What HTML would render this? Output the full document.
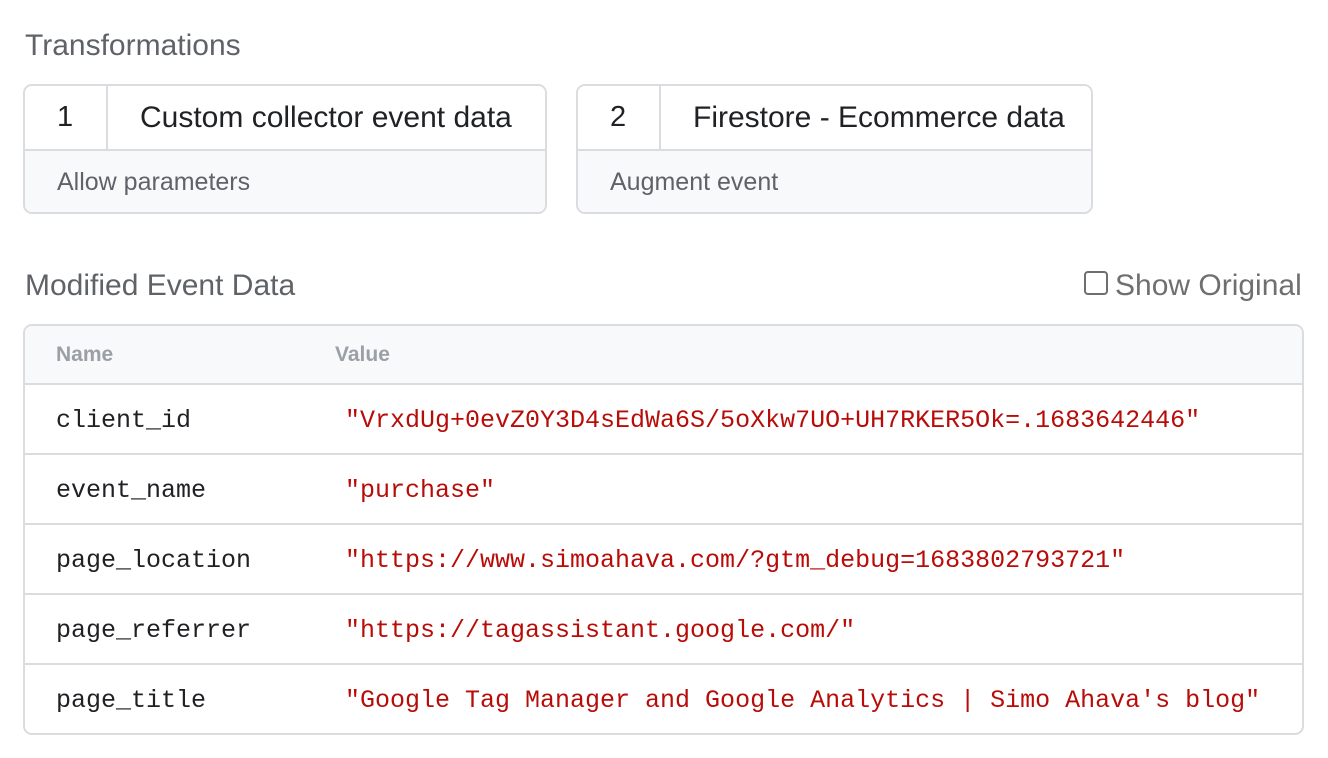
<!DOCTYPE html>
<html><head><meta charset="utf-8"><style>
*{box-sizing:border-box;margin:0;padding:0}
body{width:1328px;height:758px;background:#fff;font-family:"Liberation Sans",Arial,sans-serif;position:relative;overflow:hidden}
.abs{position:absolute}
.h{color:#5f6368;white-space:nowrap;line-height:1}
.card{position:absolute;top:84px;height:130px;border:2px solid #dadce0;border-radius:9px;overflow:hidden}
.top{height:65px;border-bottom:2px solid #dadce0;display:flex;background:#fff}
.num{width:83px;border-right:2px solid #dadce0;font-size:29px;color:#202124;display:flex;align-items:center;padding-left:32px}
.title{font-size:30px;color:#202124;display:flex;align-items:center;padding-left:32px;white-space:nowrap}
.bot{height:63px;background:#f8f9fa;color:#5f6368;font-size:25px;padding-left:32px;display:flex;align-items:center}
.tbl{position:absolute;left:23px;top:324px;width:1281px;height:411px;border:2px solid #dadce0;border-radius:9px;overflow:hidden}
.hd{height:59px;background:#f8f9fa;border-bottom:2px solid #dadce0;position:relative;color:#9aa0a6;font-weight:bold;font-size:21px}
.row{height:70px;border-bottom:2px solid #dadce0;position:relative;font-family:"Liberation Mono",monospace;font-size:25px}
.row:last-child{border-bottom:none}
.n{position:absolute;left:31px;top:21px;color:#202124}
.v{position:absolute;left:320px;top:21px;color:#b80c09;white-space:nowrap}
</style></head><body>
<div class="abs h" style="left:25px;top:31px;font-size:30px">Transformations</div>
<div class="card" style="left:23px;width:524px"><div class="top"><div class="num">1</div><div class="title">Custom collector event data</div></div><div class="bot">Allow parameters</div></div>
<div class="card" style="left:576px;width:517px"><div class="top"><div class="num">2</div><div class="title">Firestore - Ecommerce data</div></div><div class="bot">Augment event</div></div>
<div class="abs h" style="left:25px;top:271px;font-size:30px">Modified Event Data</div>
<div class="abs" style="left:1084px;top:271px;width:24px;height:24px;border:2px solid #6f6f6f;border-radius:4px"></div>
<div class="abs h" style="left:1115px;top:271px;font-size:30px;color:#6f6f6f">Show Original</div>
<div class="tbl">
<div class="hd"><span class="abs" style="left:31px;top:17px">Name</span><span class="abs" style="left:310px;top:17px">Value</span></div>
<div class="row"><span class="n">client_id</span><span class="v">"VrxdUg+0evZ0Y3D4sEdWa6S/5oXkw7UO+UH7RKER5Ok=.1683642446"</span></div>
<div class="row"><span class="n">event_name</span><span class="v">"purchase"</span></div>
<div class="row"><span class="n">page_location</span><span class="v">"https://www.simoahava.com/?gtm_debug=1683802793721"</span></div>
<div class="row"><span class="n">page_referrer</span><span class="v">"https://tagassistant.google.com/"</span></div>
<div class="row"><span class="n">page_title</span><span class="v">"Google Tag Manager and Google Analytics | Simo Ahava's blog"</span></div>
</div>
</body></html>
